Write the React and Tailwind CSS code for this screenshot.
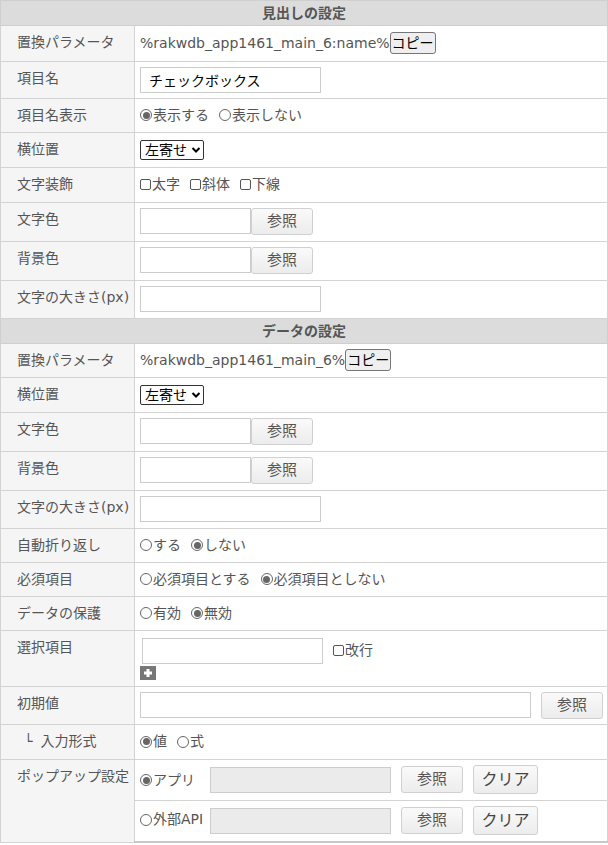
import React from 'react';

const font = { fontFamily: '"DejaVu Sans", "Noto Sans CJK JP", sans-serif' };

function Radio({ checked, children }) {
  return (
    <span className="inline-flex items-center mr-[10px] whitespace-nowrap">
      <span className="inline-flex items-center justify-center w-[12px] h-[12px] rounded-full border border-[#666] bg-white mr-[1px] shrink-0">
        {checked && <span className="w-[7px] h-[7px] rounded-full bg-[#666]" />}
      </span>
      {children}
    </span>
  );
}

function Check({ children }) {
  return (
    <span className="inline-flex items-center mr-[10px] whitespace-nowrap">
      <span className="inline-block w-[11px] h-[11px] rounded-[2px] border border-[#555] bg-white mr-[1px] shrink-0" />
      {children}
    </span>
  );
}

function RefButton({ className = '' }) {
  return (
    <button className={`h-[27px] w-[62px] shrink-0 rounded-[3px] border border-[#d0d0d0] bg-gradient-to-b from-[#fafafa] to-[#ececec] text-[#555] text-[15px] leading-none ${className}`}>
      参照
    </button>
  );
}

function ClearButton() {
  return (
    <button className="ml-[10px] h-[29px] w-[65px] shrink-0 rounded-[3px] border border-[#d0d0d0] bg-gradient-to-b from-[#fafafa] to-[#ececec] text-[#444] text-[16px] leading-none">
      クリア
    </button>
  );
}

function TextInput({ className = '' }) {
  return <input type="text" className={`h-[26px] shrink-0 border border-[#ccc] bg-white px-1 text-[14px] text-[#333] outline-none ${className}`} />;
}

function Select() {
  return (
    <span className="inline-flex items-center h-[20px] w-[64px] border border-[#333] rounded-[2px] bg-white pl-[4px] text-black text-[14px] leading-none">
      左寄せ
      <svg className="ml-[4px]" width="10" height="8" viewBox="0 0 10 8">
        <path d="M1.5 2 L5 5.5 L8.5 2" fill="none" stroke="#000" strokeWidth="2" />
      </svg>
    </span>
  );
}

function CopyButton() {
  return (
    <button className="h-[22px] px-[1px] border border-[#767676] rounded-[3px] bg-[#efefef] text-black text-[14px] leading-none">
      コピー
    </button>
  );
}

function Section({ title }) {
  return (
    <tr>
      <td colSpan={2} className="h-[25px] bg-[#dcdcdc] border border-[#cfcfcf] text-center font-bold text-[#555] leading-[21px] p-0">
        {title}
      </td>
    </tr>
  );
}

const labelCls = 'bg-[#f5f5f5] border border-[#d3d3d3] align-top pl-4 pr-0 pt-[5px] leading-[23px] text-[#555] whitespace-nowrap';
const valueCls = 'border border-[#d3d3d3] align-top pl-[5px] pr-[5px] pt-[5px] leading-[23px] text-[#555] whitespace-nowrap';

// pb: bottom padding of the value cell, used to match each row's height
function Row({ label, children, pb = 'pb-[6px]' }) {
  return (
    <tr>
      <td className={labelCls}>{label}</td>
      <td className={`${valueCls} ${pb}`}>{children}</td>
    </tr>
  );
}

function Line({ children, className = 'h-[22px]' }) {
  return <div className={`flex items-center ${className}`}>{children}</div>;
}

function ColorRow({ label }) {
  return (
    <Row label={label}>
      <div className="flex items-start">
        <TextInput className="w-[111px]" />
        <RefButton />
      </div>
    </Row>
  );
}

function PopupLine({ checked, label }) {
  return (
    <div className="flex items-center h-[29px]">
      <span className="w-[70px] shrink-0">
        <Radio checked={checked}>{label}</Radio>
      </span>
      <input type="text" disabled className="h-[26px] w-[181px] shrink-0 border border-[#ccc] bg-[#ebebeb]" />
      <RefButton className="ml-[10px]" />
      <ClearButton />
    </div>
  );
}

export default function App() {
  return (
    <div className="w-[608px] bg-white text-[14px]" style={font}>
      <table className="w-[608px] border-collapse table-fixed">
        <colgroup>
          <col className="w-[134px]" />
          <col />
        </colgroup>
        <tbody>
          <Section title="見出しの設定" />
          <Row label="置換パラメータ">
            <Line className="h-[24px]">
              %rakwdb_app1461_main_6:name%
              <CopyButton />
            </Line>
          </Row>
          <Row label="項目名" pb="pb-[5px]">
            <input type="text" defaultValue="チェックボックス" className="block h-[26px] w-[181px] border border-[#ccc] bg-white px-[8px] text-[14px] text-black outline-none" />
          </Row>
          <Row label="項目名表示">
            <Line>
              <Radio checked>表示する</Radio>
              <Radio>表示しない</Radio>
            </Line>
          </Row>
          <Row label="横位置">
            <Line className="h-[23px]">
              <Select />
            </Line>
          </Row>
          <Row label="文字装飾">
            <Line className="h-[23px]">
              <Check>太字</Check>
              <Check>斜体</Check>
              <Check>下線</Check>
            </Line>
          </Row>
          <ColorRow label="文字色" />
          <ColorRow label="背景色" />
          <Row label="文字の大きさ(px)">
            <TextInput className="w-[181px] block" />
          </Row>

          <Section title="データの設定" />
          <Row label="置換パラメータ">
            <Line>
              %rakwdb_app1461_main_6%
              <CopyButton />
            </Line>
          </Row>
          <Row label="横位置">
            <Line className="h-[23px]">
              <Select />
            </Line>
          </Row>
          <ColorRow label="文字色" />
          <ColorRow label="背景色" />
          <Row label="文字の大きさ(px)">
            <TextInput className="w-[181px] block" />
          </Row>
          <Row label="自動折り返し">
            <Line>
              <Radio>する</Radio>
              <Radio checked>しない</Radio>
            </Line>
          </Row>
          <Row label="必須項目">
            <Line>
              <Radio>必須項目とする</Radio>
              <Radio checked>必須項目としない</Radio>
            </Line>
          </Row>
          <Row label="データの保護">
            <Line>
              <Radio>有効</Radio>
              <Radio checked>無効</Radio>
            </Line>
          </Row>
          <Row label="選択項目">
            <div className="flex items-start pl-[2px] mt-[2px]">
              <TextInput className="w-[181px]" />
              <span className="ml-[10px] mt-[1px]">
                <Check>改行</Check>
              </span>
            </div>
            <div className="mt-[2px] w-[16px] h-[14px] bg-[#777] flex items-center justify-center">
              <svg width="10" height="10" viewBox="0 0 10 10">
                <path d="M5 1 V9 M1 5 H9" stroke="#fff" strokeWidth="3" />
              </svg>
            </div>
          </Row>
          <Row label="初期値" pb="pb-[5px]">
            <div className="flex items-start">
              <TextInput className="w-[391px]" />
              <RefButton className="ml-[10px]" />
            </div>
          </Row>
          <Row
            label={
              <span className="pl-[7px]">
                └<span className="ml-[8px]">入力形式</span>
              </span>
            }
          >
            <Line className="h-[23px]">
              <Radio checked>値</Radio>
              <Radio>式</Radio>
            </Line>
          </Row>
          <tr>
            <td rowSpan={2} className={labelCls}>
              ポップアップ設定
            </td>
            <td className="border border-[#d3d3d3] align-top pl-[5px] pr-[5px] pt-[5px] pb-[6px] text-[#555]">
              <PopupLine checked label="アプリ" />
            </td>
          </tr>
          <tr>
            <td className="border border-[#d3d3d3] border-b-2 border-b-[#c8c8c8] align-top pl-[5px] pr-[5px] pt-[5px] pb-[6px] text-[#555]">
              <PopupLine label="外部API" />
            </td>
          </tr>
        </tbody>
      </table>
    </div>
  );
}
